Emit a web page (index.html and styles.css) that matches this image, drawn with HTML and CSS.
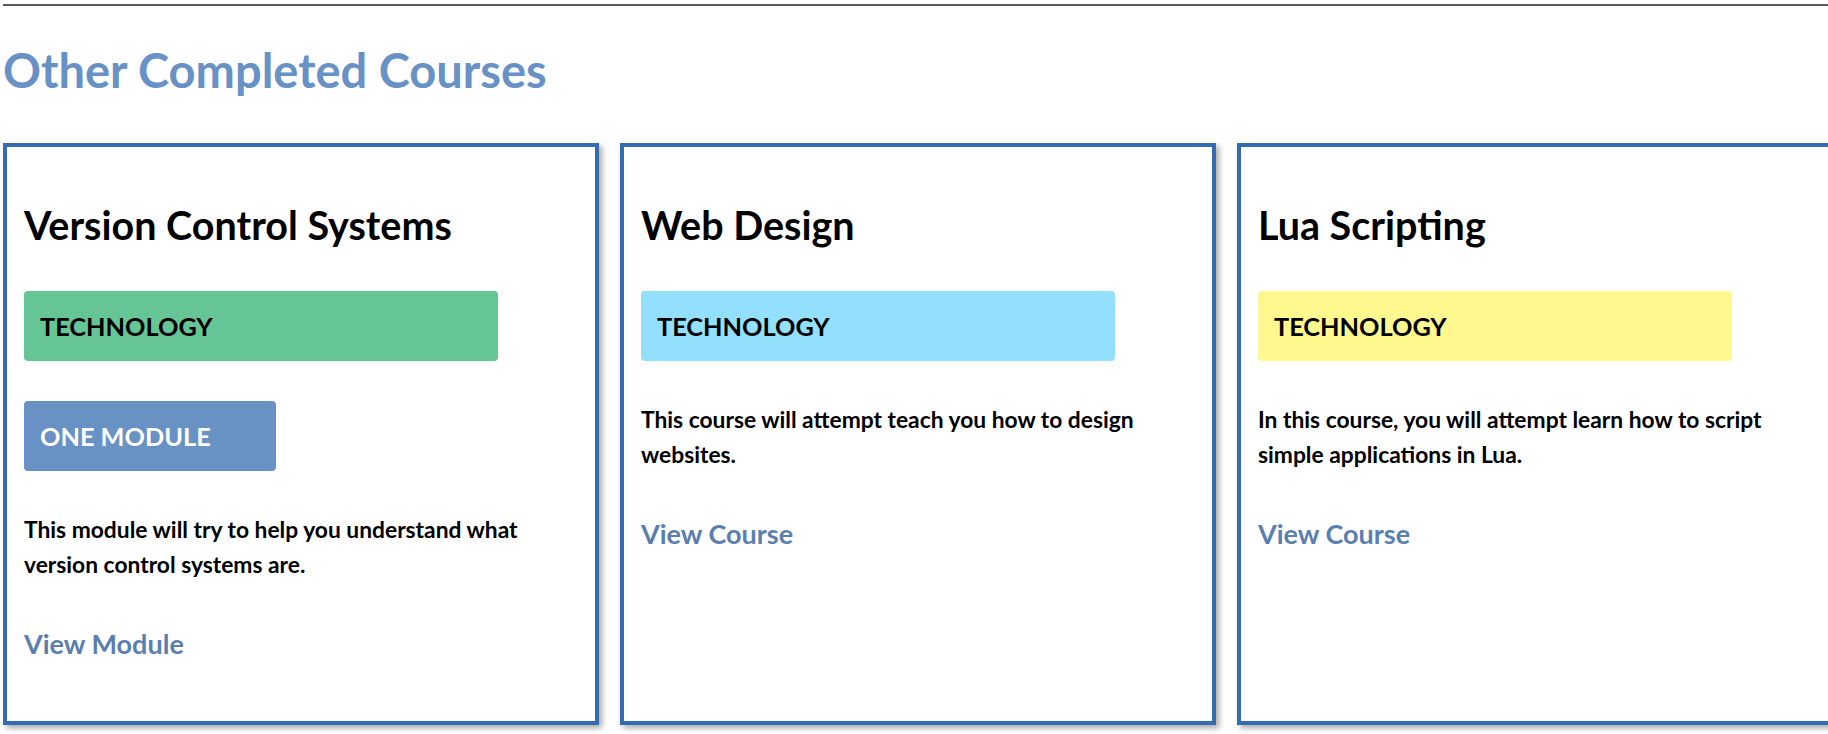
FILE: index.html
```html
<!DOCTYPE html>
<html lang="en">
<head>
<meta charset="utf-8">
<title>Other Completed Courses</title>
<link rel="stylesheet" href="styles.css">
</head>
<body>
<hr class="divider">
<section class="completed">
  <h2 class="completed-title">Other Completed Courses</h2>
  <div class="course-row">
    <article class="course-card">
      <h3 class="course-name">Version Control Systems</h3>
      <div class="tag tag-green">TECHNOLOGY</div>
      <div class="tag tag-module">ONE MODULE</div>
      <p class="course-desc">This module will try to help you understand what version control systems are.</p>
      <a class="course-link" href="#">View Module</a>
    </article>
    <article class="course-card">
      <h3 class="course-name">Web Design</h3>
      <div class="tag tag-sky">TECHNOLOGY</div>
      <p class="course-desc">This course will attempt teach you how to design websites.</p>
      <a class="course-link" href="#">View Course</a>
    </article>
    <article class="course-card">
      <h3 class="course-name">Lua Scripting</h3>
      <div class="tag tag-yellow">TECHNOLOGY</div>
      <p class="course-desc">In this course, you will attempt learn how to script simple applications in Lua.</p>
      <a class="course-link" href="#">View Course</a>
    </article>
  </div>
</section>
</body>
</html>
```
FILE: styles.css
```css
html, body {
  margin: 0;
  background: #ffffff;
}

body {
  padding: 4px 0 0 3px;
  overflow: hidden;
  font-family: "Lato", "Liberation Sans", sans-serif;
  font-weight: 700;
  color: #000000;
}

.divider {
  margin: 0;
  height: 2px;
  border: 0;
  background: #5b5b5b;
}

.completed-title {
  margin: 37px 0 45px;
  font-size: 47px;
  line-height: 55px;
  font-weight: 700;
  color: #6891c5;
}

.course-row {
  display: flex;
  gap: 21px;
  align-items: stretch;
  padding-bottom: 12px;
  overflow: hidden;
}

.course-card {
  flex: 0 0 596px;
  box-sizing: border-box;
  border: 4px solid #346cb4;
  padding: 0 17px 62px;
  background: #ffffff;
  box-shadow: 3px 3px 6px rgba(0, 0, 0, 0.35);
}

.course-name {
  margin: 55px 0 0;
  font-size: 39.5px;
  line-height: 46px;
  font-weight: 700;
}

.tag {
  box-sizing: border-box;
  height: 70px;
  margin-top: 43px;
  padding: 0 16px;
  border-radius: 4px;
  font-size: 25.3px;
  line-height: 70px;
  color: #000000;
}

.tag-green {
  width: 474px;
  background: #66c594;
}

.tag-sky {
  width: 474px;
  background: #93e0fd;
}

.tag-yellow {
  width: 474px;
  background: #fff88f;
}

.tag-module {
  width: 252px;
  margin-top: 40px;
  background: #6891c4;
  color: #ffffff;
}

.course-desc {
  margin: 41px 0 0;
  font-size: 22.8px;
  line-height: 35px;
}

.course-link {
  display: block;
  margin-top: 46px;
  font-size: 27px;
  line-height: 31px;
  color: #5a7fae;
  text-decoration: none;
}
```
